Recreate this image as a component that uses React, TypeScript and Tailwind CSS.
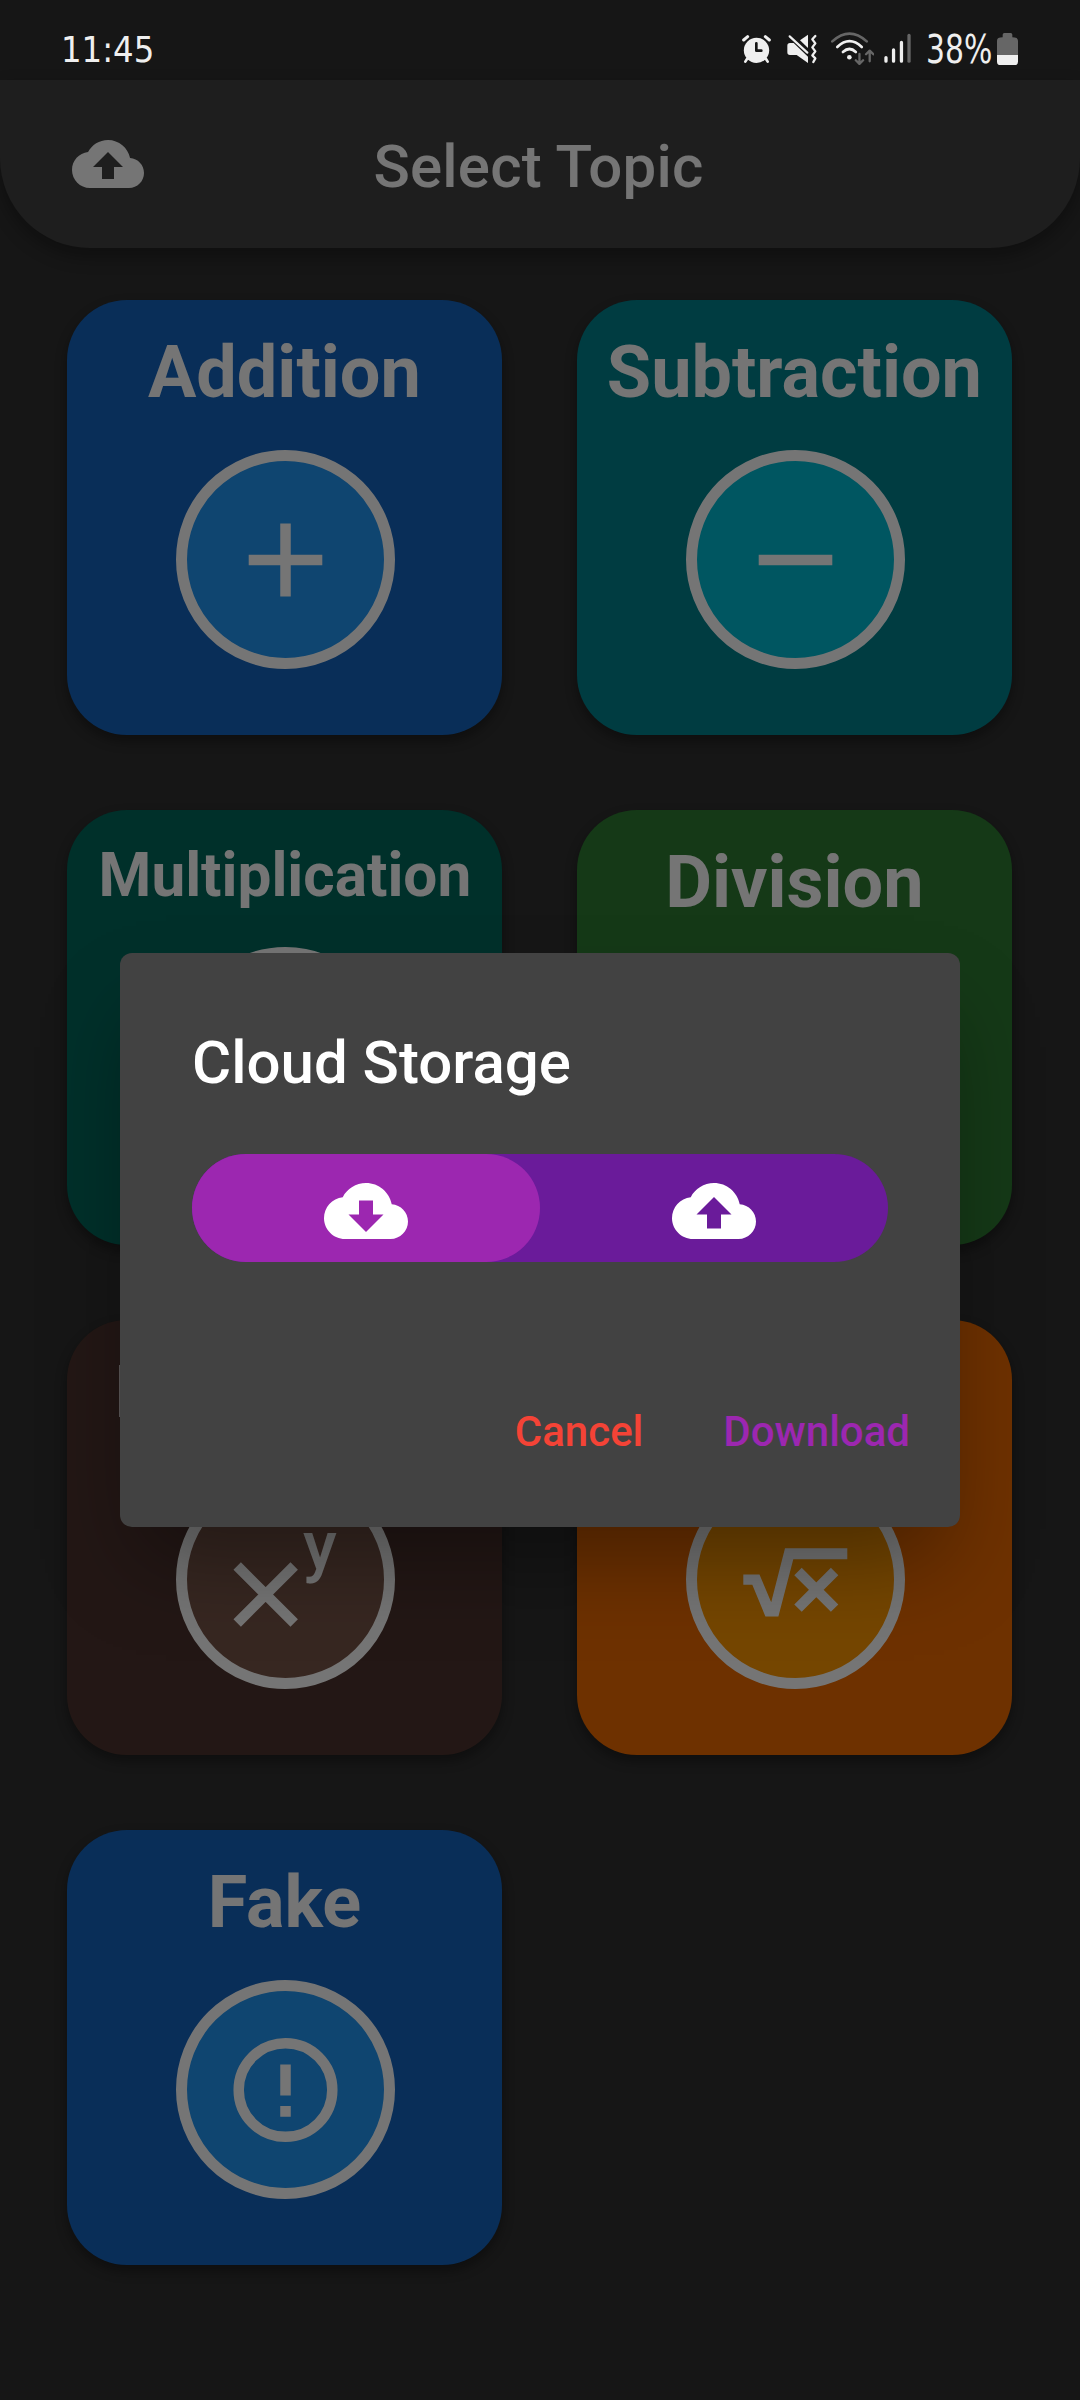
import React from "react";

const cloudBody =
  "M19.35 10.04C18.67 6.59 15.64 4 12 4 9.11 4 6.6 5.64 5.35 8.04 2.34 8.36 0 10.91 0 14c0 3.31 2.69 6 6 6h13c2.76 0 5-2.24 5-5 0-2.64-2.05-4.78-4.65-4.96z";

function CloudUpload({ className }: { className: string }) {
  return (
    <svg viewBox="0 0 24 24" className={className} fill="currentColor" fillRule="evenodd">
      <path d={cloudBody + "M14 13v4h-4v-4H7l5-5 5 5h-3z"} />
    </svg>
  );
}

function CloudDownload({ className }: { className: string }) {
  return (
    <svg viewBox="0 0 24 24" className={className} fill="currentColor" fillRule="evenodd">
      <path d={cloudBody + "M17 13l-5 5-5-5h3V9h4v4h3z"} />
    </svg>
  );
}

/** Topic glyphs share a canvas centred on 0,0 inside the ring. */
function Glyph({ children }: { children: React.ReactNode }) {
  return (
    <svg viewBox="-98.5 -98.5 197 197" className="h-[197px] w-[197px]" fill="none" stroke="#fff" strokeWidth="10.5">
      {children}
    </svg>
  );
}

const plus = (
  <Glyph>
    <path d="M-36.8 0.5H36.8M0 -36.1V37.1" />
  </Glyph>
);
const minus = (
  <Glyph>
    <path d="M-36.8 0.5H36.8" />
  </Glyph>
);
const times = (
  <Glyph>
    <path d="M-28 -28L28 28M28 -28L-28 28" />
  </Glyph>
);
const divide = (
  <Glyph>
    <path d="M-36.8 0H36.8" />
    <circle cy="-24" r="7" fill="#fff" stroke="none" />
    <circle cy="24" r="7" fill="#fff" stroke="none" />
  </Glyph>
);
const power = (
  <>
    <Glyph>
      <path d="M-48.3 -13.5L8.7 43.5M8.7 -13.5L-48.3 43.5" />
    </Glyph>
    <span className="absolute left-[116px] top-[30px] text-[69px] leading-[69px] font-medium text-white">y</span>
  </>
);
const root = (
  <Glyph>
    <path
      d="M-52.2 -5H-36L-24.3 22.7L-10.5 -31.3H51.8V-20.3H-2.2L-17.1 37H-30.1L-43.2 5.3H-52.2Z"
      fill="#fff"
      stroke="none"
    />
    <path d="M2.5 -8L39.1 28.6M39.1 -8L2.5 28.6" />
  </Glyph>
);
const alert = (
  <Glyph>
    <circle cy="0.5" r="46.8" />
    <path d="M0 -25.1V6.1M0 16.5V27.3" />
  </Glyph>
);

type Topic = { name: string; card: string; ring: string; small?: boolean; glyph: React.ReactNode };

const topics: Topic[] = [
  { name: "Addition", card: "bg-[#1565c0]", ring: "bg-[#2196f3]", glyph: plus },
  { name: "Subtraction", card: "bg-[#00838f]", ring: "bg-[#00bcd4]", glyph: minus },
  { name: "Multiplication", card: "bg-[#00695c]", ring: "bg-[#009688]", small: true, glyph: times },
  { name: "Division", card: "bg-[#2e7d32]", ring: "bg-[#4caf50]", glyph: divide },
  { name: "Exponents", card: "bg-[#4e342e]", ring: "bg-[#795548]", glyph: power },
  { name: "", card: "bg-[#ef6c00]", ring: "bg-[#ff9800]", glyph: root },
  { name: "Fake", card: "bg-[#1565c0]", ring: "bg-[#2196f3]", glyph: alert },
];

function TopicCard({ name, card, ring, small, glyph }: Topic) {
  return (
    <div
      className={`flex h-[435px] flex-col items-center rounded-[60px] pt-[31px] shadow-[0_6px_12px_rgba(0,0,0,0.35)] ${card}`}
    >
      <h2
        className={
          small
            ? "h-[71px] text-[60.3px] leading-[69px] font-bold text-white"
            : "-ml-px h-[84px] text-[72px] leading-[84px] font-bold text-white"
        }
      >
        {name}
      </h2>
      <div
        className={`relative mt-[35px] ml-px flex h-[219px] w-[219px] shrink-0 items-center justify-center rounded-full border-[11px] border-white ${ring}`}
      >
        {glyph}
      </div>
    </div>
  );
}

function StatusBar() {
  return (
    <div className="absolute inset-x-0 top-0 flex h-20 items-start pt-8 text-[#efefef]">
      <div className="ml-[61px] h-[33px] w-[94px] whitespace-nowrap font-['DejaVu_Sans_Condensed','DejaVu_Sans',sans-serif] text-[36px] leading-[36px] [font-stretch:condensed]">
        11:45
      </div>
      <div className="ml-auto mr-[62px] flex h-[33px] items-start">
        <svg viewBox="66 36 87 99" className="mr-4 h-[33px] w-[29px]" fill="none" stroke="currentColor" strokeLinecap="round">
          <circle cx="109.5" cy="91" r="38" fill="currentColor" stroke="none" />
          <path d="M71 60L83 50M148 60L136 50" strokeWidth="9" />
          <path d="M81 117L76 125M138 117L143 125" strokeWidth="8" />
          <path d="M109 70V92H124" stroke="#161616" strokeWidth="8" strokeLinejoin="round" />
        </svg>
        <svg viewBox="201 36 90 99" className="mr-[14px] h-[33px] w-[30px]" fill="none" stroke="currentColor" strokeLinecap="round" strokeLinejoin="round">
          <path d="M202 77Q202 69 210 69H221L264 110V129L230 105H210Q202 105 202 97Z" fill="currentColor" stroke="none" />
          <path d="M240 61L264 44V84Z" fill="currentColor" stroke="none" />
          <path d="M209 49L262 98" strokeWidth="6.5" />
          <path d="M286 48L277 58L286 70L277 82L286 94L277 106L286 115L280 126" strokeWidth="7" />
        </svg>
        <svg viewBox="332 36 130 99" className="mr-[10px] h-[33px] w-[43px]" fill="none" stroke="currentColor" strokeLinecap="round" strokeLinejoin="round">
          <path d="M336 64Q388 17 440 64" stroke="#666" strokeWidth="8" />
          <path d="M351 81Q388 46 425 81" strokeWidth="8" />
          <path d="M368 96Q388 78 407 96" strokeWidth="8" />
          <circle cx="387.500" cy="112" r="7" fill="currentColor" stroke="none" />
          <path d="M418 102V130M407 121L418 132L429 121M449 124V94M438 103L449 92L460 103" stroke="#666" strokeWidth="7" />
        </svg>
        <svg viewBox="491 36 82 99" className="mr-[15px] h-[33px] w-[27px]" fill="none" stroke="currentColor" strokeWidth="10" strokeLinecap="round">
          <path d="M497 113V124M520 90V124M544 67V124" />
          <path d="M567 46V124" stroke="#666" />
        </svg>
        <div className="mr-[5px] h-[33px] w-[66px] whitespace-nowrap font-['DejaVu_Sans_Condensed','DejaVu_Sans',sans-serif] text-[39px] leading-[36px] [font-stretch:condensed]">
          <span className="inline-block origin-left scale-x-[0.85]">38%</span>
        </div>
        <svg viewBox="831 36 63 99" className="h-[33px] w-[21px]">
          <path d="M848 52V44Q848 39 853 39H872Q877 39 877 44V52Q894 52 894 62V105H831V62Q831 52 848 52Z" fill="#666" />
          <path d="M831 105H894V125Q894 135 884 135H841Q831 135 831 125Z" fill="#efefef" />
        </svg>
      </div>
    </div>
  );
}

function CloudDialog() {
  return (
    <div className="flex h-[574px] w-[840px] flex-col rounded-xl bg-[#424242] px-[72px] shadow-[0_48px_84px_-16px_rgba(0,0,0,0.36)]">
      <h2 className="mt-[75px] h-[70px] text-[60px] leading-[70px] font-medium text-white">Cloud Storage</h2>
      <div className="mt-[56px] flex h-[108px] rounded-full bg-[#6a1b9a] text-white">
        <button className="flex flex-1 items-center justify-center rounded-full bg-[#9c27b0] pt-[5px]">
          <CloudDownload className="h-[84px] w-[84px]" />
        </button>
        <button className="flex flex-1 items-center justify-center pt-[5px]">
          <CloudUpload className="h-[84px] w-[84px]" />
        </button>
      </div>
      <div className="-mr-[22px] mt-[145px] flex justify-end gap-[80px] text-[42px] leading-[50px] font-medium">
        <button className="text-[#f44336]">Cancel</button>
        <button className="text-[#9c27b0]">Download</button>
      </div>
    </div>
  );
}

export default function App() {
  return (
    <div className="relative h-[2400px] w-[1080px] overflow-hidden bg-[#303030] pt-20 font-[Roboto,sans-serif]">
      <header className="grid h-[168px] grid-cols-[1fr_auto_1fr] items-center rounded-b-[90px] bg-[#424242] px-[72px] text-white shadow-[0_8px_18px_rgba(0,0,0,0.32)]">
        <CloudUpload className="h-[72px] w-[72px]" />
        <h1 className="-ml-[3px] pt-[5px] text-[60px] leading-[70px] font-medium tracking-[0.2px]">Select Topic</h1>
      </header>
      <main className="grid grid-cols-[435px_435px] gap-[75px] pt-[52px] pl-[67.4px]">
        {topics.map((t) => (
          <TopicCard key={t.card + t.name} {...t} />
        ))}
      </main>
      <div className="absolute inset-0 flex items-center justify-center bg-black/54 pt-20">
        <CloudDialog />
      </div>
      <StatusBar />
    </div>
  );
}
